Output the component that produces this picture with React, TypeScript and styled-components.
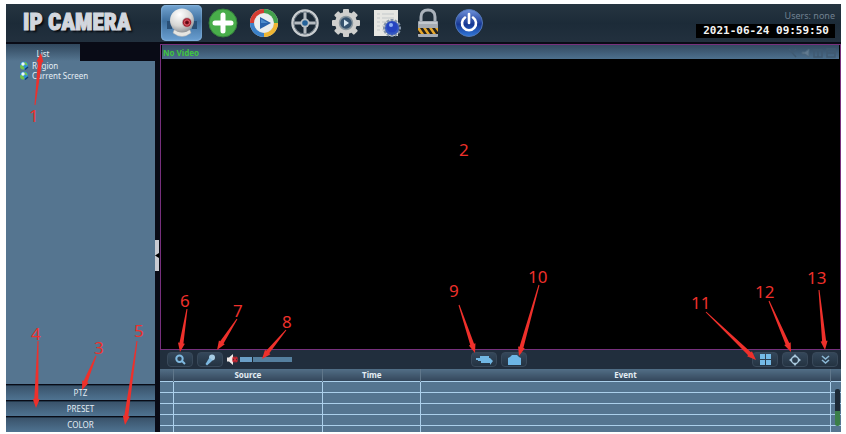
import React from "react";
import styled, { createGlobalStyle, css } from "styled-components";

const GlobalStyle = createGlobalStyle`
  *, *::before, *::after { box-sizing: border-box; }
  body { margin: 0; background: #fff; font-family: "Noto Sans", "Open Sans", sans-serif; font-size: 8px; line-height: 10px; color: #e4edf4; }
  button { font: inherit; color: inherit; border: 0; padding: 0; margin: 0; cursor: pointer; }
  svg { display: block; }
`;

const steel = "linear-gradient(#3a536b, #4f7391)";

const Page = styled.div`
  position: relative;
  min-height: 100vh;
  padding: 4px 5px 2px 6px;
  display: flex;
`;
const Shell = styled.div`
  flex: 1;
  min-width: 0;
  display: flex;
  flex-direction: column;
  background: #090b16;
`;
const Header = styled.header`
  display: flex;
  align-items: center;
  height: 38px;
  background: linear-gradient(#263541, #1c2b38 50%, #22303e);
`;
const Brand = styled.h1`
  margin: 0;
  width: 155px;
  padding-left: 17px;
  font: 900 23px/38px Impact, "Roboto Condensed", "Liberation Sans Narrow", "Open Sans Condensed", "Roboto", sans-serif;
  color: #d3d7de;
  -webkit-text-stroke: 1px #d3d7de;
  text-shadow: 2px 2px 2px #05080c;
  white-space: nowrap;
`;
const Nav = styled.nav`
  display: flex;
  align-items: center;
  height: 38px;
`;
const NavButton = styled.button<{ $active?: boolean }>`
  width: 41px;
  height: 36px;
  display: grid;
  place-items: center;
  background: transparent;
  border-radius: 5px;
  ${(p) => p.$active && css`background: linear-gradient(#74a5d2, #3e6f9e 45%, #6ba0d2); box-shadow: inset 0 0 2px #a6cdf0;`}
`;
const Status = styled.div`
  margin-left: auto;
  padding-right: 6px;
  padding-top: 2px;
  display: flex;
  flex-direction: column;
  align-items: flex-end;
  gap: 2px;
`;
const Users = styled.span`
  font-size: 9px;
  line-height: 12px;
  color: #708090;
`;
const Clock = styled.time`
  padding: 0 6px 0 7px;
  background: #000;
  color: #f4f4f4;
  font: 700 11px/14px "DejaVu Sans Mono", monospace;
  white-space: pre;
`;
const Body = styled.div`
  flex: 1;
  display: flex;
  padding-top: 2px;
`;
const Sidebar = styled.aside`
  width: 149px;
  flex: none;
  display: flex;
  flex-direction: column;
  gap: 1px;
`;
const TreePanel = styled.div`
  flex: 1;
  display: flex;
  flex-direction: column;
`;
const Tab = styled.button`
  width: 74px;
  height: 17px;
  padding-top: 2px;
  background: linear-gradient(#30475d, #557590);
`;
const Tree = styled.ul`
  flex: 1;
  margin: 0;
  padding: 0 0 0 13px;
  list-style: none;
  background: #557590;
`;
const TreeItem = styled.li`
  height: 10px;
  display: flex;
  align-items: center;
  gap: 3px;
`;
const PanelButton = styled.button`
  height: 15px;
  background: ${steel};
  border-top: 1px solid #23384b;
`;
const Gutter = styled.div`
  width: 5px;
  flex: none;
  display: flex;
  flex-direction: column;
  justify-content: center;
  align-items: flex-start;
  padding-top: 34px;
`;
const Collapse = styled.button`
  width: 4px;
  height: 31px;
  background: #c9ccd3;
  color: #111;
`;
const Main = styled.main`
  flex: 1;
  min-width: 0;
  display: flex;
  flex-direction: column;
`;
const Video = styled.section`
  flex: 1;
  display: flex;
  flex-direction: column;
  border: 1px solid #77307d;
  background: #000;
`;
const VideoBar = styled.div`
  height: 14px;
  margin: 0 1px;
  padding: 2px 2px 0 1px;
  display: flex;
  align-items: center;
  justify-content: space-between;
  background: linear-gradient(#334960, #4d708e);
  color: #3fc540;
  font-weight: 700;
`;
const Toolbar = styled.div`
  height: 19px;
  display: grid;
  grid-template-columns: 1fr auto 1fr;
  align-items: center;
  padding: 0 3px 0 7px;
  background: #212e3d;
`;
const Tools = styled.div<{ $end?: boolean }>`
  display: flex;
  align-items: center;
  justify-content: ${(p) => (p.$end ? "flex-end" : "flex-start")};
  gap: 4px;
`;
const CenterTools = styled(Tools)`
  margin-right: 7px;
`;
const ToolButton = styled.button`
  width: 26px;
  height: 15px;
  display: grid;
  place-items: center;
  border-radius: 4px;
  border: 1px solid #39495a;
  background: linear-gradient(#34475a, #243342);
`;
const Sound = styled.div`
  display: flex;
  align-items: center;
  gap: 2px;
`;
const MuteButton = styled.button`
  background: transparent;
`;
const Volume = styled.input`
  appearance: none;
  width: 52px;
  height: 5px;
  margin: 0;
  background: linear-gradient(90deg, #6b9fc7 23%, #557f9e 23%);
  &::-webkit-slider-thumb { appearance: none; width: 1px; height: 5px; background: #1a2631; }
`;
const Log = styled.table`
  width: 100%;
  table-layout: fixed;
  border-collapse: collapse;
  background: #557590;
`;
const HeadCell = styled.th`
  position: relative;
  height: 12px;
  padding: 0;
  font-size: 8px;
  line-height: 11px;
  font-weight: 700;
  background: linear-gradient(#526e86, #34475b);
  &:not(:last-child) { border-right: 1px solid #60778b; }
`;
const Cell = styled.td`
  height: 11px;
  padding: 0;
  border-top: 1px solid #acd0eb;
  &:not(:last-child) { border-right: 1px solid #acd0eb; }
`;
const TailRow = styled.tr`
  & > td { height: 7px; }
`;
const LogWrap = styled.div`
  position: relative;
`;
const Meter = styled.div`
  position: absolute;
  right: 1px;
  bottom: 6px;
  width: 5px;
  height: 37px;
  border-radius: 2px;
  background: linear-gradient(#1d2a36 60%, #3b7f48 60%);
`;

const Globe = () => (
  <svg width="10" height="10" viewBox="0 0 10 10">
    <circle cx="5" cy="4.5" r="4" fill="#2c8fd0" />
    <path d="M1 5c1-2 2-1 3 0s2 2 1 3.500C2 9 1 7 1 5M5 1c2 0 3 1 3.500 3-1 1-2 0-3-1z" fill="#73c34b" />
    <circle cx="4" cy="3" r="1.700" fill="#ecfaff" />
    <path d="M6 8.500 9 6" stroke="#163f73" strokeWidth="1.500" />
  </svg>
);

const Webcam = () => (
  <svg width="30" height="32" viewBox="0 0 30 32">
    <defs>
      <radialGradient id="ball" cx=".4" cy=".25" r=".8"><stop offset="0" stopColor="#fff" /><stop offset=".6" stopColor="#d6d6d4" /><stop offset="1" stopColor="#888b90" /></radialGradient>
    </defs>
    <path d="M0 14h5v8H0M25 14h5v8h-5" fill="#294f76" />
    <path d="M7 23q8-3 16 0l1 3q-9 7-18 0z" fill="#e6e5e1" stroke="#a6a9ac" strokeWidth=".5" />
    <circle cx="15" cy="13.500" r="12" fill="url(#ball)" />
    <circle cx="20" cy="15.500" r="5" fill="#b7a4a8" />
    <circle cx="20" cy="15.500" r="4.200" fill="#a51c2c" />
    <circle cx="20" cy="15.500" r="2.700" fill="none" stroke="#d8646c" />
    <circle cx="20" cy="15.500" r="1.500" fill="#5d0b15" />
  </svg>
);
const Plus = () => (
  <svg width="30" height="30" viewBox="0 0 30 30">
    <circle cx="15" cy="15" r="14" fill="#48ad4a" stroke="#357e3c" />
    <path d="M15 7v16M7 15h16" stroke="#fff" strokeWidth="5" strokeLinecap="round" />
  </svg>
);
const Playback = () => (
  <svg width="30" height="30" viewBox="0 0 30 30">
    <circle cx="15" cy="15" r="14" fill="#d9dcda" />
    <g fill="none" strokeWidth="4">
      <path d="M3 15A12 12 0 0 1 15 3" stroke="#d53c32" />
      <path d="M15 3A12 12 0 0 1 27 15" stroke="#43a04c" />
      <path d="M27 15A12 12 0 0 1 15 27" stroke="#efb634" />
      <path d="M15 27A12 12 0 0 1 3 15" stroke="#3b81c9" />
    </g>
    <circle cx="15" cy="15" r="9.500" fill="#e9eeef" />
    <path d="M11 9v12l11-6z" fill="#2863ab" />
    <path d="M12 11v4h7z" fill="#4b8ccd" />
  </svg>
);
const Reel = () => (
  <svg width="30" height="30" viewBox="0 0 30 30">
    <circle cx="15" cy="15" r="12.500" fill="#1b2936" stroke="#c9cdd0" strokeWidth="2.500" />
    <path d="M15 3v24M3 15h24" stroke="#b4babf" strokeWidth="3" />
    <circle cx="15" cy="15" r="4.500" fill="#b9c0c5" />
    <circle cx="15" cy="15" r="2.800" fill="#24629a" />
    <circle cx="15" cy="15" r="11" fill="none" stroke="#6f7b85" />
  </svg>
);
const Gear = () => (
  <svg width="30" height="30" viewBox="0 0 30 30">
    <g fill="#cfcfcd">
      {[0, 45, 90, 135].map((a) => <rect key={a} x="12" y="1" width="6" height="28" rx="1" transform={`rotate(${a} 15 15)`} />)}
      <circle cx="15" cy="15" r="11" />
    </g>
    <circle cx="15" cy="15" r="6.500" fill="#35526e" stroke="#8a979f" strokeWidth="1.500" />
    <path d="M13 11.500v7l5-3.500z" fill="#d7e6ef" />
  </svg>
);
const Journal = () => (
  <svg width="30" height="30" viewBox="0 0 30 30">
    <path d="M2 2h24v26H2z" fill="#e6e6e2" />
    <path d="M5 6h3M10 6h12M5 10h3M10 10h12M5 14h3M10 14h5M5 18h3M10 18h3M5 22h3M10 22h3" stroke="#c3c8ca" />
    <g fill="#8394aa">
      {[0, 30, 60, 90, 120, 150].map((a) => <rect key={a} x="18.500" y="11" width="3" height="18" transform={`rotate(${a} 20 20)`} />)}
    </g>
    <circle cx="20" cy="20" r="7" fill="#3558c0" />
    <circle cx="20" cy="19" r="5.500" fill="#2544c0" />
    <circle cx="19" cy="17" r="2" fill="#8fb0f5" />
  </svg>
);
const Padlock = () => (
  <svg width="30" height="30" viewBox="0 0 30 30">
    <path d="M8 15V9q0-7 7-7t7 7v6" fill="none" stroke="#aab2bb" strokeWidth="3" />
    <rect x="5" y="13" width="20" height="16" rx="1" fill="#a5abb3" />
    <path d="M5 20h20v6H5z" fill="#22211e" />
    <path d="M5 20h2l4 6H8l-3-4zM10 20h3l4 6h-3zM16 20h3l4 6h-3zM22 20h3v4z" fill="#e6a72b" />
    <path d="M6 15h18" stroke="#e0e5e8" />
  </svg>
);
const Power = () => (
  <svg width="30" height="30" viewBox="0 0 30 30">
    <defs><linearGradient id="pw" x2="0" y2="1"><stop stopColor="#6f92dc" /><stop offset=".55" stopColor="#173893" /><stop offset="1" stopColor="#3179db" /></linearGradient></defs>
    <circle cx="15" cy="15" r="13.500" fill="url(#pw)" stroke="#5277b6" />
    <path d="M11 9.500a7 7 0 1 0 8 0" fill="none" stroke="#fff" strokeWidth="2.600" strokeLinecap="round" />
    <path d="M15 6v9" stroke="#fff" strokeWidth="2.600" strokeLinecap="round" />
  </svg>
);
const VideoGlyphs = () => (
  <svg width="50" height="12" viewBox="0 0 50 12" fill="none" stroke="#405a72" strokeWidth="1.500">
    <path d="m2 2 7 8M9 2 6 5" />
    <path d="M15 5h3l4-3v8l-4-3h-3z" fill="#617a90" stroke="#4c667d" strokeWidth="1" />
    <path d="M27 3h8v7h-8zM31 3v7" />
    <path d="M40 2h8v8h-8zM40 6h8" />
  </svg>
);
const Search = () => (
  <svg width="12" height="11" viewBox="0 0 12 11" fill="none" stroke="#7fb9e0" strokeWidth="2">
    <circle cx="5.500" cy="4.800" r="3.200" /><path d="m8 7 3 3" />
  </svg>
);
const Mic = () => (
  <svg width="12" height="12" viewBox="0 0 12 12">
    <circle cx="8" cy="3.500" r="3" fill="#a8cde4" /><path d="m5.500 3.500 3 3L3 11.500 1.500 10z" fill="#7db7de" />
  </svg>
);
const Muted = () => (
  <svg width="11" height="11" viewBox="0 0 11 11">
    <path d="M0 3.500h2L6 0v11L2 7.500H0z" fill="#f1e9e7" />
    <path d="m6 3 4 5M10 3 6 8" stroke="#d22a33" strokeWidth="1.600" />
    <circle cx="8" cy="5.500" r="2.500" fill="none" stroke="#bd2631" />
  </svg>
);
const Recorder = () => (
  <svg width="17" height="10" viewBox="0 0 17 10" fill="#71b7e3">
    <path d="M0 3h2l2 0V1h9v2h1l3 3-3 4V8H5V6H2V5H0z" />
  </svg>
);
const Camera = () => (
  <svg width="15" height="10" viewBox="0 0 15 10" fill="#6db6e5"><path d="M3 2 5 0h5l2 2 2 1v7H1V3z" /></svg>
);
const Grid = () => (
  <svg width="11" height="11" viewBox="0 0 11 11" fill="#74b9e5"><path d="M0 0h5v5H0zM6 0h5v5H6zM0 6h5v5H0zM6 6h5v5H6z" /></svg>
);
const Expand = () => (
  <svg width="12" height="12" viewBox="0 0 12 12" fill="#a9c8dc"><circle cx="6" cy="6" r="3.500" fill="none" stroke="#a9c8dc" strokeWidth="1.300" /><path d="m6 0 2.500 3h-5zM6 12l2.500-3h-5zM0 6l3-2.500v5zM12 6 9 3.500v5z" /></svg>
);
const Chevrons = () => (
  <svg width="9" height="10" viewBox="0 0 9 10" fill="none" stroke="#8cb9d6" strokeWidth="1.600"><path d="m1 1 3.500 3L8 1M1 5l3.500 3L8 5" /></svg>
);

type Zone = "topLeft" | "center" | "bottomLeft" | "bottomCenter" | "bottomRight";
const zoneCss = {
  topLeft: css`left: 0; top: 40px;`,
  center: css`left: calc(50% + 27px); top: 130px;`,
  bottomLeft: css`left: 0; bottom: 0;`,
  bottomCenter: css`left: calc(50% + 17px); bottom: 0;`,
  bottomRight: css`right: 0; bottom: 0;`,
};
const Callouts = styled.svg<{ $zone: Zone }>`
  position: absolute;
  pointer-events: none;
  fill: #ee302b;
  font: 17px "Noto Sans", sans-serif;
  ${(p) => zoneCss[p.$zone]}
`;

type Pt = [number, number];
const Arrow = ({ from, to }: { from: Pt; to: Pt }) => {
  const dx = to[0] - from[0];
  const dy = to[1] - from[1];
  const len = Math.hypot(dx, dy);
  const at = (along: number, side: number) =>
    `${from[0] + (dx / len) * along - (dy / len) * side},${from[1] + (dy / len) * along + (dx / len) * side}`;
  return <polygon points={[at(0, 0.5), at(len - 9, 2), at(len - 9, 3.5), at(len, 0), at(len - 9, -3.5), at(len - 9, -2), at(0, -0.5)].join(" ")} />;
};

const navItems = [
  ["Live view", Webcam], ["Add device", Plus], ["Playback", Playback], ["Video", Reel],
  ["Settings", Gear], ["Log", Journal], ["Lock", Padlock], ["Power", Power],
] as const;

export default function App() {
  return (
    <Page>
      <GlobalStyle />
      <Shell>
        <Header>
          <Brand>IP CAMERA</Brand>
          <Nav>
            {navItems.map(([name, Icon], i) => (
              <NavButton key={name} $active={i === 0} aria-label={name}><Icon /></NavButton>
            ))}
          </Nav>
          <Status>
            <Users>Users: none</Users>
            <Clock>2021-06-24 09:59:50</Clock>
          </Status>
        </Header>
        <Body>
          <Sidebar>
            <TreePanel>
              <Tab>List</Tab>
              <Tree>
                <TreeItem><Globe />Region</TreeItem>
                <TreeItem><Globe />Current Screen</TreeItem>
              </Tree>
            </TreePanel>
            <PanelButton>PTZ</PanelButton>
            <PanelButton>PRESET</PanelButton>
            <PanelButton>COLOR</PanelButton>
          </Sidebar>
          <Gutter>
            <Collapse aria-label="Collapse sidebar">
              <svg width="4" height="5" viewBox="0 0 4 5"><path d="M4 0v5L0 2.500z" /></svg>
            </Collapse>
          </Gutter>
          <Main>
            <Video>
              <VideoBar>No Video<VideoGlyphs /></VideoBar>
            </Video>
            <Toolbar>
              <Tools>
                <ToolButton aria-label="Zoom"><Search /></ToolButton>
                <ToolButton aria-label="Talk"><Mic /></ToolButton>
                <Sound>
                  <MuteButton aria-label="Mute"><Muted /></MuteButton>
                  <Volume type="range" aria-label="Volume" defaultValue={23} />
                </Sound>
              </Tools>
              <CenterTools>
                <ToolButton aria-label="Record"><Recorder /></ToolButton>
                <ToolButton aria-label="Snapshot"><Camera /></ToolButton>
              </CenterTools>
              <Tools $end>
                <ToolButton aria-label="Split view"><Grid /></ToolButton>
                <ToolButton aria-label="Full screen"><Expand /></ToolButton>
                <ToolButton aria-label="Hide events"><Chevrons /></ToolButton>
              </Tools>
            </Toolbar>
            <LogWrap>
              <Log>
                <colgroup><col width="13" /><col width="22%" /><col width="98" /><col /><col width="11" /></colgroup>
                <thead>
                  <tr><HeadCell /><HeadCell>Source</HeadCell><HeadCell>Time</HeadCell><HeadCell>Event</HeadCell><HeadCell /></tr>
                </thead>
                <tbody>
                  {[0, 1, 2, 3].map((r) => (
                    <tr key={r}><Cell /><Cell /><Cell /><Cell /><Cell /></tr>
                  ))}
                  <TailRow><Cell /><Cell /><Cell /><Cell /><Cell /></TailRow>
                </tbody>
              </Log>
              <Meter />
            </LogWrap>
          </Main>
        </Body>
      </Shell>

      <Callouts $zone="topLeft" width="60" height="90" viewBox="0 40 60 90">
        <text x="29" y="122">1</text>
        <Arrow from={[35, 105]} to={[41, 53]} />
      </Callouts>
      <Callouts $zone="center" width="40" height="40" viewBox="450 130 40 40">
        <text x="459" y="156">2</text>
      </Callouts>
      <Callouts $zone="bottomLeft" width="330" height="154" viewBox="0 280 330 154">
        <text x="94" y="354">3</text>
        <text x="31" y="340">4</text>
        <text x="134" y="337">5</text>
        <text x="180" y="307">6</text>
        <text x="233" y="317">7</text>
        <text x="282" y="328">8</text>
        <Arrow from={[96, 356]} to={[82, 390]} />
        <Arrow from={[38, 341]} to={[36, 408]} />
        <Arrow from={[137, 341]} to={[125, 425]} />
        <Arrow from={[187, 309]} to={[180, 352]} />
        <Arrow from={[237, 319]} to={[217, 350]} />
        <Arrow from={[286, 330]} to={[262, 359]} />
      </Callouts>
      <Callouts $zone="bottomCenter" width="120" height="174" viewBox="440 260 120 174">
        <text x="449" y="297">9</text>
        <text x="528" y="283">10</text>
        <Arrow from={[459, 305]} to={[475, 353]} />
        <Arrow from={[539, 285]} to={[519, 356]} />
      </Callouts>
      <Callouts $zone="bottomRight" width="166" height="174" viewBox="680 260 166 174">
        <text x="691" y="309">11</text>
        <text x="755" y="298">12</text>
        <text x="807" y="284">13</text>
        <Arrow from={[706, 312]} to={[756, 360]} />
        <Arrow from={[769, 301]} to={[791, 352]} />
        <Arrow from={[819, 290]} to={[825, 350]} />
      </Callouts>
    </Page>
  );
}
